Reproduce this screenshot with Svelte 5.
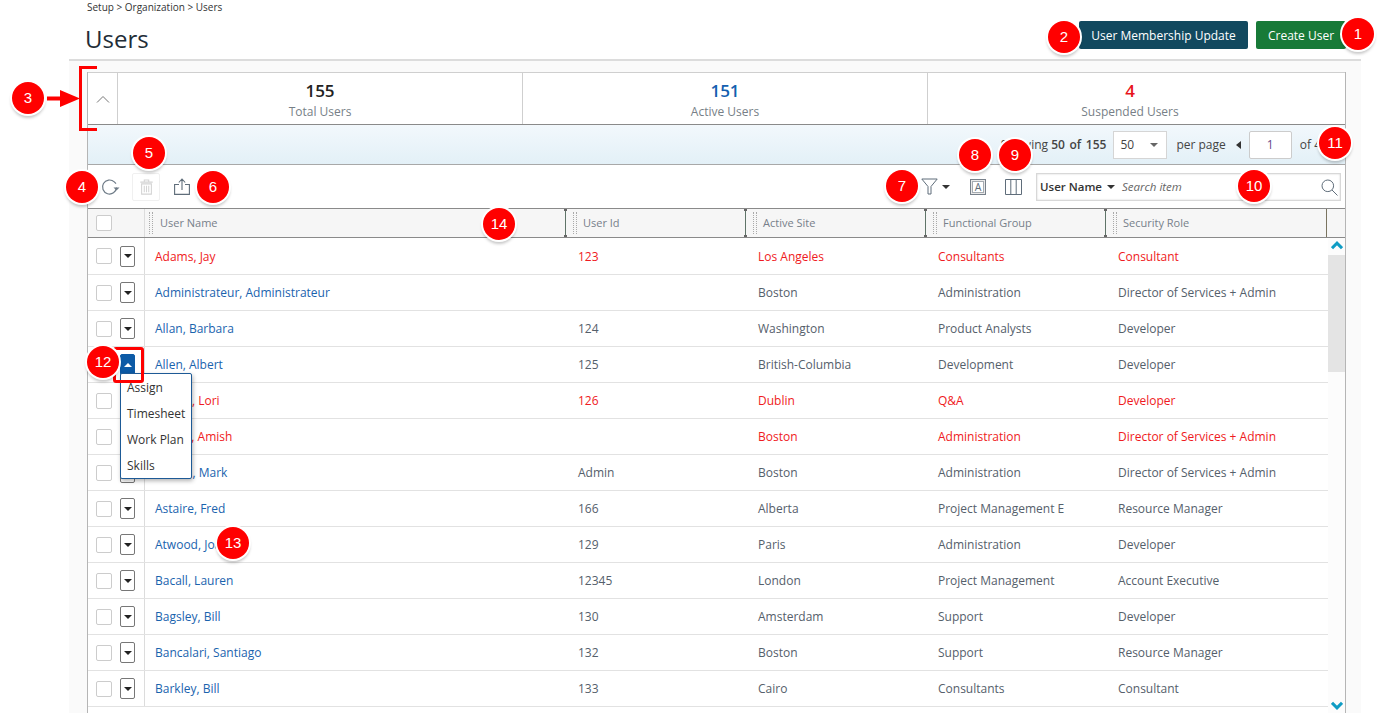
<script>
    const columns = ['User Id', 'Active Site', 'Functional Group', 'Security Role'];

    const users = [
        { name: 'Adams, Jay', id: '123', site: 'Los Angeles', group: 'Consultants', role: 'Consultant', suspended: true },
        { name: 'Administrateur, Administrateur', id: '', site: 'Boston', group: 'Administration', role: 'Director of Services + Admin' },
        { name: 'Allan, Barbara', id: '124', site: 'Washington', group: 'Product Analysts', role: 'Developer' },
        { name: 'Allen, Albert', id: '125', site: 'British-Columbia', group: 'Development', role: 'Developer', open: true },
        { name: 'Allison, Lori', id: '126', site: 'Dublin', group: 'Q&A', role: 'Developer', suspended: true },
        { name: 'Anand, Amish', id: '', site: 'Boston', group: 'Administration', role: 'Director of Services + Admin', suspended: true },
        { name: 'Arnold, Mark', id: 'Admin', site: 'Boston', group: 'Administration', role: 'Director of Services + Admin' },
        { name: 'Astaire, Fred', id: '166', site: 'Alberta', group: 'Project Management E', role: 'Resource Manager' },
        { name: 'Atwood, Joan', id: '129', site: 'Paris', group: 'Administration', role: 'Developer' },
        { name: 'Bacall, Lauren', id: '12345', site: 'London', group: 'Project Management', role: 'Account Executive' },
        { name: 'Bagsley, Bill', id: '130', site: 'Amsterdam', group: 'Support', role: 'Developer' },
        { name: 'Bancalari, Santiago', id: '132', site: 'Boston', group: 'Support', role: 'Resource Manager' },
        { name: 'Barkley, Bill', id: '133', site: 'Cairo', group: 'Consultants', role: 'Consultant' }
    ];

    const menuItems = ['Assign', 'Timesheet', 'Work Plan', 'Skills'];

    // numbered annotation circles laid over the screenshot
    const callouts = [
        { n: 1, x: 1358, y: 34 },
        { n: 2, x: 1064, y: 37 },
        { n: 3, x: 28, y: 98 },
        { n: 4, x: 82, y: 187 },
        { n: 5, x: 149, y: 153 },
        { n: 6, x: 213, y: 187 },
        { n: 7, x: 902, y: 186 },
        { n: 8, x: 975, y: 155 },
        { n: 9, x: 1015, y: 155 },
        { n: 10, x: 1254, y: 186 },
        { n: 11, x: 1335, y: 143 },
        { n: 12, x: 103, y: 362 },
        { n: 13, x: 233, y: 543 },
        { n: 14, x: 499, y: 224 }
    ];
</script>

<div class="page">
    <div class="head">
        <div>
            <div class="crumbs">Setup &gt; Organization &gt; Users</div>
            <h1>Users</h1>
        </div>
        <div class="actions">
            <button class="btn teal">User Membership Update</button>
            <button class="btn green">Create User</button>
        </div>
    </div>

    <div class="body">
        <div class="panel">
            <div class="summary">
                <div class="collapse">
                    <svg width="14" height="8" viewBox="0 0 14 8"><path d="M1 7.500 7 1.500l6 6" fill="none" stroke="#777" stroke-width="1" /></svg>
                </div>
                <div class="stat"><b>155</b><span>Total Users</span></div>
                <div class="stat"><b class="blue">151</b><span>Active Users</span></div>
                <div class="stat last"><b class="red">4</b><span>Suspended Users</span></div>
            </div>

            <div class="pager">
                <span>Showing <em>50 of 155</em></span>
                <div class="select">50<i class="caret"></i></div>
                <span>per page</span>
                <i class="prev"></i>
                <div class="page-no">1</div>
                <span>of 4</span>
            </div>

            <div class="toolbar">
                <div class="tools-left">
                    <svg class="refresh" width="20" height="20" viewBox="0 0 20 20" fill="none" stroke="#6d7a86" stroke-width="1.200">
                        <path d="M16.500 10.500a7 7 0 1 1-2.200-5.600l1.700 1.800" />
                        <path d="M13.500 10.500h6l-3 3z" fill="#6d7a86" stroke="none" />
                    </svg>
                    <div class="trash">
                        <svg width="15" height="16" viewBox="0 0 16 18" fill="none" stroke="#d4d4d4" stroke-width="1.200">
                            <path d="M1 3.500h14M5.500 3V1.200h5V3M2.500 5.500h11V17h-11zM5.500 7.500v7.500M8 7.500v7.500M10.500 7.500v7.500" />
                        </svg>
                    </div>
                    <svg class="export" width="16" height="17" viewBox="0 0 16 17" fill="none" stroke="#5f6d7a" stroke-width="1.100">
                        <path d="M5 6.500H.6v9.900h14.800V6.500H11M8 12V1.500M4.800 4.500 8 1l3.200 3.500" />
                    </svg>
                </div>
                <div class="tools-right">
                    <svg class="funnel" width="17" height="17" viewBox="0 0 17 17" fill="none" stroke="#5f6d7a" stroke-width="1">
                        <path d="M.8 1h15.400L10 8.500V16H7V8.500z" />
                    </svg>
                    <i class="caret dark"></i>
                    <svg class="font-ico" width="16" height="16" viewBox="0 0 16 16">
                        <rect x=".5" y=".5" width="15" height="15" fill="#e9e9e9" stroke="#77808a" />
                        <rect x="2.500" y="2.500" width="11" height="11" fill="#fff" stroke="#a5abb1" />
                        <text x="8" y="12" text-anchor="middle" font-size="10.500" fill="#5f6d7a" font-family="Open Sans">A</text>
                    </svg>
                    <svg class="cols-ico" width="17" height="16" viewBox="0 0 17 16" fill="none" stroke="#5f6d7a">
                        <path d="M.5.500h16v15H.5zM5.800.500v15M11.200.500v15" />
                    </svg>
                    <div class="search">
                        <span class="field">User Name</span><i class="caret dark"></i>
                        <span class="hint">Search item</span>
                        <svg width="17" height="17" viewBox="0 0 17 17" fill="none" stroke="#5f6d7a">
                            <circle cx="6.800" cy="6.800" r="5.800" /><path d="m11 11 5.500 5.500" />
                        </svg>
                    </div>
                </div>
            </div>

            <div class="thead">
                <div class="c-select"><span class="check"></span></div>
                <div class="th c-name"><span class="grip"></span>User Name</div>
                {#each columns as col, i}
                    <div class="th c-{i}"><span class="grip"></span>{col}</div>
                {/each}
            </div>

            <div class="tbody">
                <div class="rows">
                    {#each users as u}
                        <div class="row" class:suspended={u.suspended}>
                            <div class="c-select">
                                <span class="check"></span>
                                <span class="menu-btn" class:open={u.open}><i></i></span>
                            </div>
                            <div class="td c-name"><span class="name">{u.name}</span></div>
                            <div class="td c-0">{u.id}</div>
                            <div class="td c-1">{u.site}</div>
                            <div class="td c-2">{u.group}</div>
                            <div class="td c-3">{u.role}</div>
                            {#if u.open}
                                <div class="menu">
                                    {#each menuItems as item}
                                        <div>{item}</div>
                                    {/each}
                                </div>
                            {/if}
                        </div>
                    {/each}
                </div>
                <div class="scroll">
                    <svg class="up" width="12" height="9" viewBox="0 0 12 9"><path d="M1 7.200 6 2.200l5 5" fill="none" stroke="#0f9cc4" stroke-width="3" /></svg>
                    <div class="thumb"></div>
                    <svg class="down" width="12" height="9" viewBox="0 0 12 9"><path d="M1 1.800 6 6.800l5-5" fill="none" stroke="#0f9cc4" stroke-width="3" /></svg>
                </div>
            </div>
        </div>
    </div>

    <!-- red annotation marks -->
    <div class="bracket b3"></div>
    <svg class="arrow" width="33" height="17" viewBox="0 0 33 17"><path d="M0 6.500h13V0l20 8.500-20 8.500v-6.500H0z" fill="#f00" /></svg>
    <div class="bracket-12"></div>
    {#each callouts as c}
        <div class="callout" style="left:{c.x - 16}px;top:{c.y - 16}px">{c.n}</div>
    {/each}
</div>

<style>
    :global(body) {
        margin: 0;
        background: #fff;
    }

    .page {
        position: relative;
        width: 1388px;
        height: 713px;
        overflow: hidden;
        font-family: "Open Sans", sans-serif;
        font-size: 12px;
        color: #55606b;
    }

    .head {
        display: flex;
        justify-content: space-between;
        height: 59px;
        margin-left: 87px;
        margin-right: 42px;
    }

    .crumbs {
        font-size: 10px;
        line-height: 15px;
        color: #333;
    }

    h1 {
        margin: 8px 0 0 -2px;
        font-size: 24px;
        font-weight: 400;
        line-height: 32px;
        color: #222c36;
    }

    .actions {
        display: flex;
        gap: 8px;
        padding-top: 21px;
    }

    .btn {
        height: 28px;
        padding: 0;
        border: none;
        border-radius: 2px;
        font: 12px "Open Sans", sans-serif;
        color: #fff;
    }

    .teal {
        width: 169px;
        background: #12495f;
    }

    .green {
        width: 90px;
        background: #187a38;
    }

    .body {
        margin-left: 69px;
        width: 1292px;
        height: 654px;
        box-sizing: border-box;
        padding: 11px 15px 0 18px;
        background: #fafafa;
        border-top: 2px solid #dcdcdc;
    }

    .panel {
        border-left: 1px solid #b5b5b5;
        border-right: 1px solid #b5b5b5;
        background: #fff;
        height: 700px;
    }

    .summary {
        display: flex;
        height: 51px;
        border-top: 1px solid #cfcfcf;
        border-bottom: 1px solid #8a8a8a;
    }

    .collapse {
        display: flex;
        align-items: center;
        justify-content: center;
        width: 29px;
        border-right: 1px solid #cfcfcf;
    }

    .stat {
        display: flex;
        flex-direction: column;
        align-items: center;
        width: 404px;
        border-right: 1px solid #cfcfcf;
    }

    .stat.last {
        border-right: none;
    }

    .stat b {
        margin-top: 6px;
        font-size: 17px;
        font-weight: 600;
        line-height: 24px;
        color: #222;
    }

    .stat b.blue {
        color: #145fb0;
    }

    .stat b.red {
        color: #e8141c;
    }

    .stat span {
        margin-top: 1px;
        font-size: 12px;
        line-height: 16px;
        color: #777f87;
    }

    .pager {
        display: flex;
        align-items: center;
        justify-content: flex-end;
        height: 39px;
        padding-right: 24px;
        color: #444;
        background: linear-gradient(#f2f8fc, #e3f0f7);
        border-bottom: 1px solid #a8a8a8;
    }

    .pager em {
        font-style: normal;
        font-weight: 600;
        word-spacing: 1.500px;
    }

    .select {
        display: flex;
        align-items: center;
        justify-content: space-between;
        box-sizing: border-box;
        width: 54px;
        height: 28px;
        margin: 0 9px 0 7px;
        padding: 0 8px 0 6px;
        background: #fff;
        border: 1px solid #d5d5d5;
    }

    .prev {
        width: 0;
        height: 0;
        margin: 0 8px 0 10px;
        border: 4px solid transparent;
        border-left: none;
        border-right: 5px solid #333;
    }

    .page-no {
        box-sizing: border-box;
        width: 43px;
        height: 28px;
        margin-right: 8px;
        line-height: 26px;
        text-align: center;
        color: #6a4a8c;
        background: #fff;
        border: 1px solid #ccc;
        border-radius: 2px;
    }

    .caret {
        display: inline-block;
        width: 0;
        height: 0;
        border: 4px solid transparent;
        border-top: 4px solid #666;
        border-bottom: none;
    }

    .caret.dark {
        border-top-color: #333;
    }

    .toolbar {
        display: flex;
        align-items: center;
        justify-content: space-between;
        height: 43px;
        padding: 0 4px 0 12px;
        border-bottom: 1px solid #8a8a8a;
    }

    .tools-left,
    .tools-right {
        display: flex;
        align-items: center;
    }

    .trash {
        display: flex;
        align-items: center;
        justify-content: center;
        box-sizing: border-box;
        width: 28px;
        height: 28px;
        margin: 0 14px 0 12px;
        border: 1px solid #f0f0f0;
        border-radius: 2px;
    }

    .funnel {
        margin-right: 4px;
    }

    .font-ico {
        margin: 0 19px 0 20px;
    }

    .cols-ico {
        margin-right: 14px;
    }

    .search {
        position: relative;
        display: flex;
        align-items: center;
        box-sizing: border-box;
        width: 305px;
        height: 28px;
        padding-left: 3px;
        background: #fff;
        border: 1px solid #d8d8d8;
        box-shadow: inset 0 0 2px #ccc;
    }

    .search .field {
        margin-right: 5px;
        font-size: 11.500px;
        font-weight: 600;
        color: #333;
    }

    .search .hint {
        margin-left: 7px;
        font-size: 11.500px;
        font-style: italic;
        color: #666;
    }

    .search svg {
        position: absolute;
        right: 2px;
        top: 5px;
    }

    .thead {
        display: flex;
        height: 28px;
        background: #f6f6f6;
        border-bottom: 1px solid #8a8a8a;
    }

    .c-select {
        display: flex;
        align-items: center;
        flex: none;
        box-sizing: border-box;
        width: 57px;
        padding-left: 8px;
        border-right: 1px solid #dcdcdc;
    }

    .c-name {
        width: 420px;
    }

    .c-0,
    .c-1,
    .c-2 {
        width: 180px;
    }

    .c-3 {
        width: 222px;
    }

    .th {
        position: relative;
        display: flex;
        align-items: center;
        flex: none;
        box-sizing: border-box;
        padding-left: 15px;
        padding-bottom: 2px;
        font-size: 11px;
        color: #77808a;
    }

    .th:not(.c-name) {
        padding-left: 17px;
        border-left: 1px solid #5f7468;
    }

    .th:not(.c-name)::before,
    .th:not(.c-name)::after {
        content: '';
        position: absolute;
        left: -2px;
        width: 3px;
        height: 2px;
        background: #666;
    }

    .th:not(.c-name)::before {
        top: 0;
    }

    .th:not(.c-name)::after {
        bottom: 0;
    }

    .th.c-3 {
        border-right: 1px solid #7a7460;
    }

    .grip {
        position: absolute;
        left: 4px;
        top: 3px;
        bottom: 3px;
        width: 4px;
        border-left: 1px dotted #aaa;
        border-right: 1px dotted #aaa;
        box-sizing: border-box;
    }

    .th:not(.c-name) .grip {
        left: 7px;
    }

    .check {
        display: block;
        flex: none;
        box-sizing: border-box;
        width: 16px;
        height: 16px;
        background: #fff;
        border: 1px solid #ccc;
        border-radius: 2px;
    }

    .tbody {
        display: flex;
    }

    .rows {
        flex: none;
        width: 1240px;
    }

    .row {
        position: relative;
        display: flex;
        height: 36px;
        box-sizing: border-box;
        border-bottom: 1px solid #e2e2e2;
    }

    .row:first-child {
        height: 37px;
    }

    .td {
        flex: none;
        box-sizing: border-box;
        padding-left: 13px;
        line-height: 36px;
        white-space: nowrap;
    }

    .row:first-child .td {
        line-height: 38px;
    }

    .td.c-name {
        padding-left: 10px;
    }

    .name {
        color: #1a63ae;
    }

    .suspended .td,
    .suspended .name {
        color: #ef1a22;
    }

    .menu-btn {
        display: flex;
        align-items: center;
        justify-content: center;
        box-sizing: border-box;
        width: 15px;
        height: 21px;
        margin-left: 8px;
        background: #fff;
        border: 1px solid #777;
        border-radius: 2px;
    }

    .menu-btn i {
        width: 0;
        height: 0;
        border: 4.500px solid transparent;
        border-top: 4.500px solid #222;
        border-bottom: none;
    }

    .menu-btn.open {
        background: #0c5aa6;
        border-color: #0c5aa6;
    }

    .menu-btn.open i {
        border-top: none;
        border-bottom: 4.500px solid #fff;
    }

    .menu {
        position: absolute;
        left: 32px;
        top: 26px;
        z-index: 2;
        box-sizing: border-box;
        width: 72px;
        height: 106px;
        padding-top: 1px;
        color: #333;
        background: #fff;
        border: 1px solid #1d5a96;
        border-radius: 2px;
        box-shadow: 1px 2px 4px rgba(0, 0, 0, 0.3);
    }

    .menu div {
        height: 26px;
        padding-left: 6px;
        line-height: 26px;
    }

    .scroll {
        position: relative;
        flex: 1;
        height: 475px;
        background: #fcfcfc;
    }

    .thumb {
        margin-top: 17px;
        height: 117px;
        background: #e4e4e4;
    }

    .up,
    .down {
        position: absolute;
        left: 3px;
    }

    .up {
        top: 3px;
    }

    .down {
        top: 463px;
    }

    .callout {
        position: absolute;
        z-index: 5;
        box-sizing: border-box;
        width: 32px;
        height: 32px;
        font: 15px/32px "Liberation Sans", sans-serif;
        text-align: center;
        color: #fff;
        background: #f00;
        border-radius: 50%;
        box-shadow: 0 0 0 2px #fff, 0 3px 3px 1px rgba(0, 0, 0, 0.22);
    }

    .bracket {
        position: absolute;
        z-index: 4;
        left: 79px;
        top: 66px;
        width: 18px;
        height: 65px;
        box-sizing: border-box;
        border: 3px solid #f00;
        border-right: none;
    }

    .arrow {
        position: absolute;
        z-index: 4;
        left: 47px;
        top: 90px;
    }

    .bracket-12 {
        position: absolute;
        z-index: 4;
        left: 113px;
        top: 347px;
        width: 31px;
        height: 36px;
        box-sizing: border-box;
        border: 3px solid #f00;
        border-radius: 3px;
    }
</style>
